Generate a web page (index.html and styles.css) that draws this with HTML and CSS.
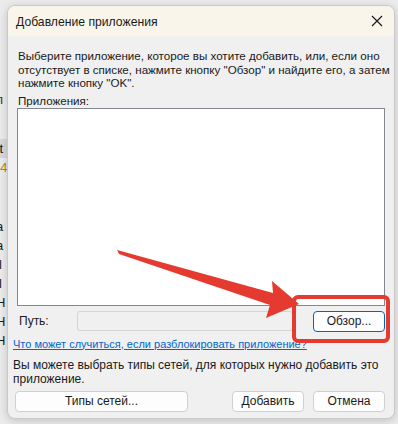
FILE: index.html
```html
<!DOCTYPE html>
<html lang="ru">
<head>
    <meta charset="UTF-8">
    <title>Добавление приложения</title>
    <link rel="stylesheet" href="styles.css">
</head>
<body>
    <div class="backdrop">
        <div class="back-col">
            <span class="frag top">п</span>
            <span class="frag sel">ft</span>
            <span class="frag warn">-4</span>
            <span class="frag">a</span>
            <span class="frag">a</span>
            <span class="frag">il</span>
            <span class="frag">il</span>
            <span class="frag">Н</span>
            <span class="frag">Н</span>
            <span class="frag">Н</span>
        </div>
    </div>

    <div class="dialog">
        <div class="titlebar">
            <span class="title">Добавление приложения</span>
            <svg class="close" width="12" height="12" viewBox="0 0 12 12">
                <path d="M1 1 L11 11 M11 1 L1 11" stroke="#1a1a1a" stroke-width="1.2" fill="none"/>
            </svg>
        </div>
        <div class="body">
            <p class="intro">Выберите приложение, которое вы хотите добавить, или, если оно<br>отсутствует в списке, нажмите кнопку "Обзор" и найдите его, а затем<br>нажмите кнопку "OK".</p>
            <div class="label">Приложения:</div>
            <div class="listbox"></div>
            <div class="path-row">
                <span class="path-label">Путь:</span>
                <div class="path-field"></div>
                <button class="btn default">Обзор...</button>
            </div>
            <a class="link" href="#">Что может случиться, если разблокировать приложение?</a>
            <p class="note">Вы можете выбрать типы сетей, для которых нужно добавить это<br>приложение.</p>
            <div class="footer">
                <button class="btn wide">Типы сетей...</button>
                <div class="actions">
                    <button class="btn">Добавить</button>
                    <button class="btn">Отмена</button>
                </div>
            </div>
        </div>
    </div>

    <div class="highlight"></div>
    <svg class="arrow" width="398" height="424" viewBox="0 0 398 424">
        <path d="M117 250 L119 254 L270 305 L266 318 L299 304 L272 281 L273 293 Z" fill="#e53a2f"/>
    </svg>
</body>
</html>
```

FILE: styles.css
```css
* { box-sizing: border-box; }
body {
    margin: 0;
    width: 398px;
    height: 424px;
    overflow: hidden;
    background: #ececec;
    font-family: 'Liberation Sans', 'Segoe UI', Arial, sans-serif;
    font-size: 12px;
    color: #1a1a1a;
    position: relative;
}
.backdrop {
    height: 100%;
    padding-top: 90px;
}
.back-col {
    display: flex;
    flex-direction: column;
    width: 20px;
    margin-left: -4px;
}
.frag {
    height: 19px;
    font-size: 13px;
    line-height: 19px;
}
.frag.top { margin-bottom: 30px; color: #333; }
.frag.sel { background: #d9d9d9; }
.frag.warn { color: #b8860b; margin-bottom: 40px; }

.dialog {
    position: absolute;
    left: 7px;
    top: 5px;
    width: 388px;
    height: 414px;
    background: #f0f0f0;
    border: 1px solid #c9c9c9;
    border-radius: 8px;
    overflow: hidden;
    box-shadow: 0 2px 10px rgba(0,0,0,0.18);
}
.titlebar {
    height: 30px;
    background: #f9f5ea;
    display: flex;
    align-items: center;
    justify-content: space-between;
    padding: 0 11px 0 8px;
}
.title {
    font-size: 12.2px;
    padding-top: 1px;
}
.close { display: block; }
.body {
    padding: 13px 9px 0 5px;
}
.intro {
    margin: 0 0 0 5px;
    font-size: 11.6px;
    line-height: 13.5px;
    white-space: nowrap;
}
.label {
    margin: 4px 0 0 5px;
    font-size: 11.6px;
    line-height: 14px;
}
.listbox {
    margin-left: 4px;
    height: 198px;
    background: #fff;
    border: 1px solid #828790;
}
.path-row {
    display: flex;
    align-items: center;
    margin-top: 5px;
    height: 21px;
}
.path-label {
    width: 64px;
    padding-left: 6px;
}
.path-field {
    width: 216px;
    height: 20px;
    background: #f0f0f0;
    border: 1px solid #d4d4d4;
    border-radius: 3px;
}
.btn {
    font-family: inherit;
    font-size: 12px;
    color: #1a1a1a;
    background: #fdfdfd;
    border: 1px solid #d0d0d0;
    border-radius: 4px;
    height: 21px;
    padding: 0;
    width: 72px;
}
.btn.default {
    margin-left: auto;
    border: 1px solid #0067c0;
}
.link {
    display: block;
    margin-top: 5px;
    color: #0066cc;
    font-size: 11px;
    line-height: 14px;
    white-space: nowrap;
}
.note {
    margin: 7px 0 0;
    line-height: 14px;
    white-space: nowrap;
}
.footer {
    display: flex;
    justify-content: space-between;
    margin-top: 5px;
    padding-left: 2px;
}
.btn.wide { width: 173px; }
.actions {
    display: flex;
    gap: 9px;
}
.highlight {
    position: absolute;
    left: 292px;
    top: 295px;
    width: 98px;
    height: 48px;
    border: 4px solid #e53a2f;
    border-radius: 6px;
}
.arrow {
    position: absolute;
    left: 0;
    top: 0;
}
```
